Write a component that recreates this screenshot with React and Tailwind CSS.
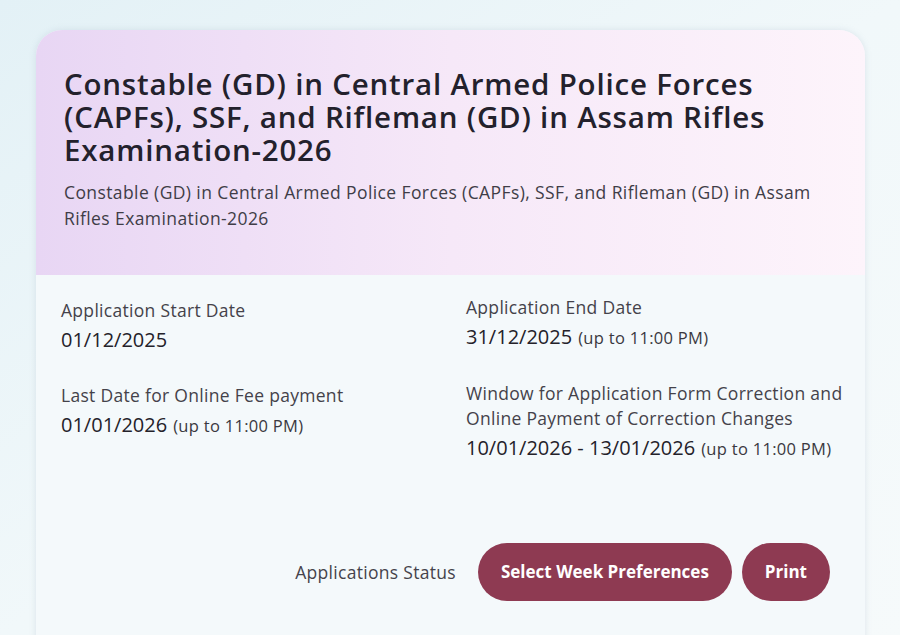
const dates = [
  {
    label: ["Application Start Date"],
    value: "01/12/2025",
  },
  {
    label: ["Application End Date"],
    value: "31/12/2025",
    note: "(up to 11:00 PM)",
  },
  {
    label: ["Last Date for Online Fee payment"],
    value: "01/01/2026",
    note: "(up to 11:00 PM)",
  },
  {
    label: [
      "Window for Application Form Correction and",
      "Online Payment of Correction Changes",
    ],
    value: "10/01/2026 - 13/01/2026",
    note: "(up to 11:00 PM)",
  },
];

const App = () => {
  const title =
    "Constable (GD) in Central Armed Police Forces (CAPFs), SSF, and Rifleman (GD) in Assam Rifles Examination-2026";
  return (
    <div
      className="h-[635px] w-[900px] overflow-hidden bg-gradient-to-br from-[#e3f1f6] via-[#f1f8fa] to-[#f6fafb] pl-[36px] pr-[35px] pt-[30px]"
      style={{ fontFamily: "'Open Sans', 'Noto Sans', sans-serif" }}
    >
      <div className="h-[640px] rounded-t-[26px] bg-[#f4f9fb] shadow-[0_0_6px_rgba(150,170,190,0.25)]">
        {/* header */}
        <div className="h-[245px] rounded-t-[26px] bg-gradient-to-r from-[#e8d6f4] via-[#f6e8f8] to-[#fdf4fb] px-[28px] pt-[37px]">
          <h1 className="max-w-[745px] text-[29.5px] font-semibold leading-[33px] tracking-[0.8px] text-[#23212c]">
            {title}
          </h1>
          <p className="mt-[13px] max-w-[760px] text-[17.5px] leading-[26px] tracking-[0.4px] text-[#3f3d47]">
            {title}
          </p>
        </div>

        {/* dates */}
        <div className="grid grid-cols-[405px_1fr] gap-y-[30px] px-[25px] pt-[23px]">
          {dates.map((d, i) => (
            <div key={i} className={i === 1 ? "-mt-[3px]" : i === 3 ? "-mt-[2px]" : ""}>
              {d.label.map((l, j) => (
                <div
                  key={j}
                  className="whitespace-nowrap text-[17.5px] leading-[25px] tracking-[0.3px] text-[#44424a]"
                >
                  {l}
                </div>
              ))}
              <div className="mt-[4px] whitespace-nowrap text-[20px] leading-[26px] text-[#24222a]">
                {d.value}
                {d.note && (
                  <span className="ml-[6px] text-[16.5px] tracking-[0.3px] text-[#3a3840]">{d.note}</span>
                )}
              </div>
            </div>
          ))}
        </div>

        {/* actions */}
        <div className="mt-[81px] flex items-center justify-end gap-[10px] pr-[35px]">
          <span className="mr-[12px] text-[17.5px] tracking-[0.3px] text-[#45434b]">Applications Status</span>
          <button className="h-[58px] rounded-full bg-[#8e3a52] px-[23px] text-[17px] font-bold text-white">
            Select Week Preferences
          </button>
          <button className="h-[58px] rounded-full bg-[#8e3a52] px-[23px] text-[17px] font-bold text-white">
            Print
          </button>
        </div>
      </div>
    </div>
  );
};

export default App;
